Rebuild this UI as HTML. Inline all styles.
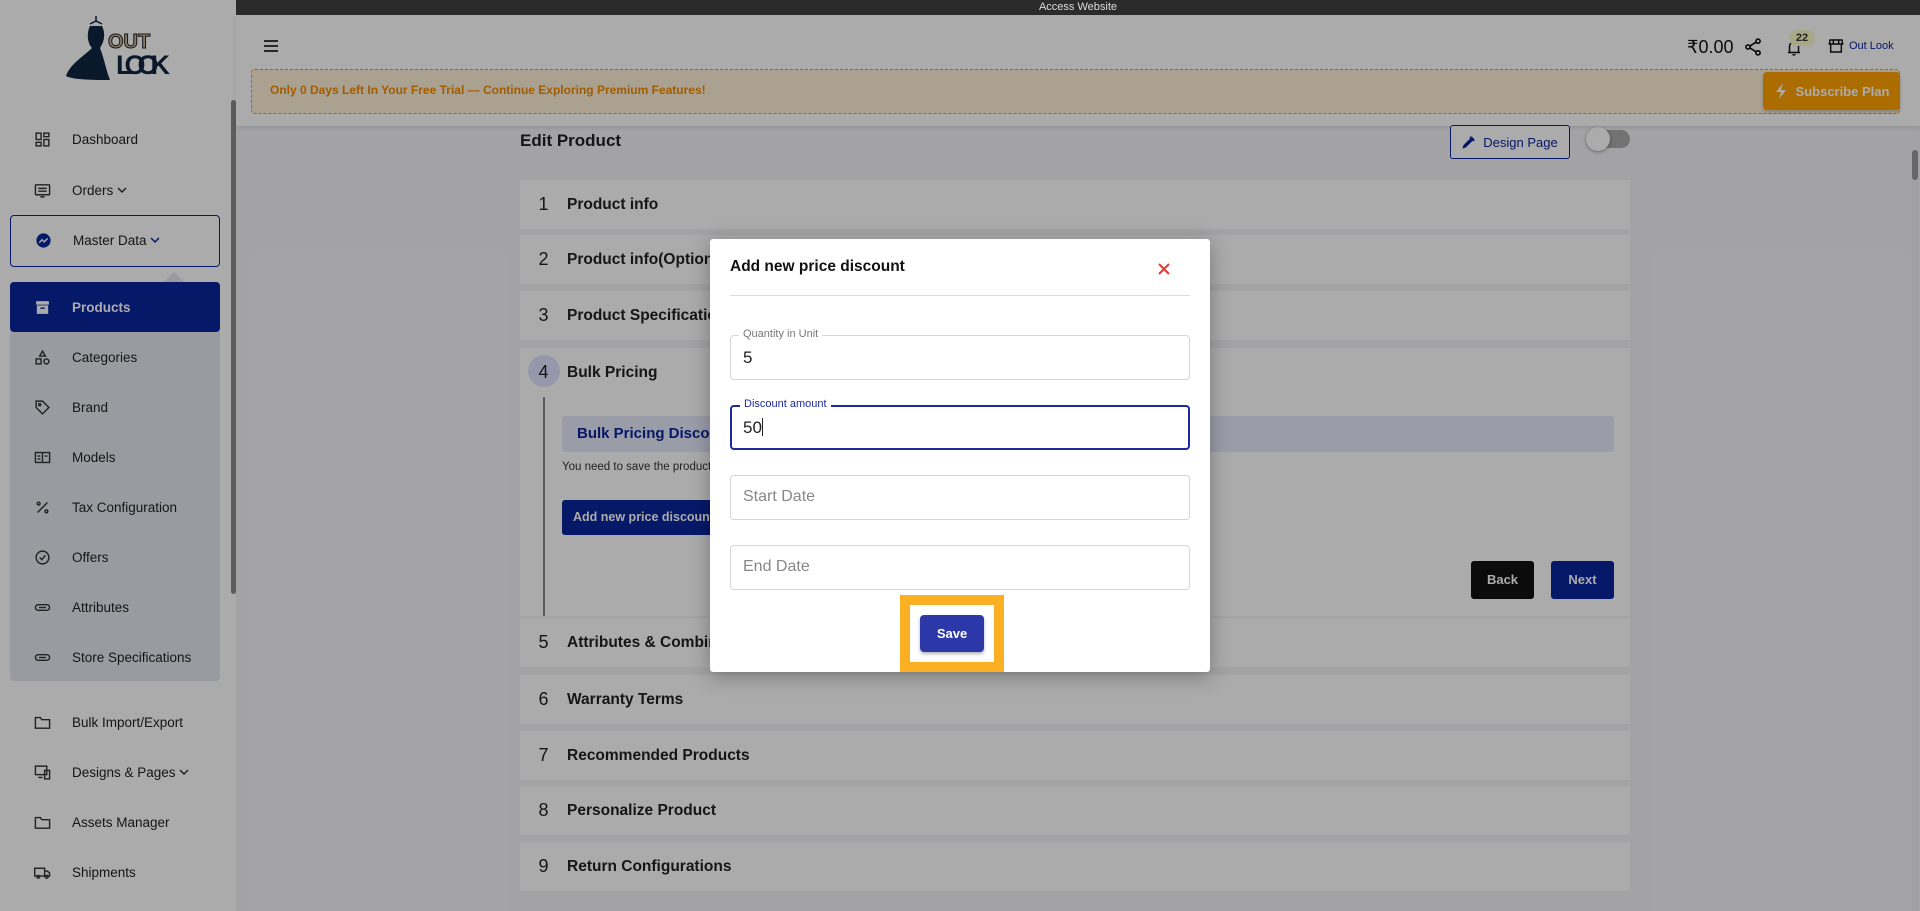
<!DOCTYPE html>
<html><head><meta charset="utf-8"><style>
*{box-sizing:border-box;margin:0;padding:0}
body{width:1920px;height:911px;overflow:hidden;font-family:"Liberation Sans",sans-serif;background:#f4f4f7;position:relative;color:#222}
.abs{position:absolute}
#side{left:0;top:0;width:236px;height:911px;background:#fff}
.nav{position:absolute;left:34px;font-size:13.5px;color:#222;display:flex;align-items:center;height:20px;white-space:nowrap}
.nav svg{width:17px;height:17px;margin-right:21px;flex:none}
.row{position:absolute;left:520px;width:1110px;height:49px;background:#fff;display:flex;align-items:center;font-size:15.5px;font-weight:bold;color:#222}
.row .n{width:47px;text-align:center;font-weight:normal;font-size:18px;color:#222;position:relative}
#ov{left:0;top:0;width:1920px;height:911px;background:rgba(0,0,0,0.33)}
.fld{position:absolute;left:730px;width:460px;height:45px;border:1px solid #d6d6d6;border-radius:4px;background:#fff}
.fld .lb{position:absolute;left:8px;top:-8px;background:#fff;padding:0 4px;font-size:11px;color:#777}
.fld .v{position:absolute;left:12px;top:12px;font-size:17px;color:#222}
.fld .ph{position:absolute;left:12px;top:12px;font-size:16px;color:#888}
</style></head><body>

<div id="side" class="abs">
  <svg class="abs" style="left:64px;top:14px" width="108" height="68" viewBox="0 0 108 68">
    <path d="M32 2 l0 6 M26 10 l6-3 6 3" stroke="#0f2540" stroke-width="1.5" fill="none"/>
    <path d="M26 12 C22 20 24 30 28 34 C20 42 6 50 2 62 C10 66 30 66 46 66 C42 56 40 44 36 34 C40 28 42 20 38 12 Z" fill="#0f2540"/>
    <text x="44" y="34" font-family="Liberation Sans" font-weight="bold" font-size="20" fill="#c9b8a0" stroke="#222" stroke-width="1">OUT</text>
    <text x="52" y="60" font-family="Liberation Sans" font-weight="bold" font-size="27" fill="#0f2540" textLength="54">LOOK</text>
  </svg>
  <div class="abs" style="left:231px;top:100px;width:5px;height:494px;background:#8a8a8a;border-radius:3px"></div>

  <div class="nav" style="top:129px"><svg viewBox="0 0 24 24" fill="none" stroke="#333" stroke-width="2"><rect x="3" y="3" width="7" height="9"/><rect x="14" y="3" width="7" height="5"/><rect x="14" y="12" width="7" height="9"/><rect x="3" y="16" width="7" height="5"/></svg>Dashboard</div>
  <div class="nav" style="top:180px"><svg viewBox="0 0 24 24" fill="none" stroke="#333" stroke-width="2"><rect x="2" y="4" width="20" height="14" rx="1"/><path d="M6 9h12M6 13h12M9 21h6"/></svg>Orders&nbsp;<svg style="width:10px;height:10px;margin:0" viewBox="0 0 10 10"><path d="M1 3l4 4 4-4" stroke="#333" stroke-width="1.5" fill="none"/></svg></div>
  <div class="abs" style="left:10px;top:215px;width:210px;height:52px;border:1px solid #0a259b;border-radius:4px"></div>
  <div class="nav" style="top:230px;left:35px"><svg viewBox="0 0 24 24"><circle cx="12" cy="12" r="10" fill="#0a259b"/><path d="M6 15l4-4 3 3 5-5" stroke="#fff" stroke-width="2" fill="none"/></svg>Master Data&nbsp;<svg style="width:10px;height:10px;margin:0" viewBox="0 0 10 10"><path d="M1 3l4 4 4-4" stroke="#0a259b" stroke-width="1.5" fill="none"/></svg></div>
  <div class="abs" style="left:164px;top:272px;width:0;height:0;border-left:10px solid transparent;border-right:10px solid transparent;border-bottom:10px solid #e6e8f0"></div>
  <div class="abs" style="left:10px;top:282px;width:210px;height:399px;background:#e6e8f0;border-radius:4px"></div>
  <div class="abs" style="left:10px;top:282px;width:210px;height:50px;background:#0a259b;border-radius:4px"></div>
  <div class="nav" style="top:297px;color:#fff;font-weight:bold"><svg viewBox="0 0 24 24"><rect x="3" y="3" width="18" height="5" fill="#fff"/><rect x="4" y="9" width="16" height="12" fill="#fff"/><rect x="9" y="12" width="6" height="2" fill="#0a259b"/></svg>Products</div>
  <div class="nav" style="top:347px"><svg viewBox="0 0 24 24" fill="none" stroke="#333" stroke-width="2"><path d="M12 3l4 7H8z"/><rect x="3" y="14" width="7" height="7"/><circle cx="17.5" cy="17.5" r="3.5"/></svg>Categories</div>
  <div class="nav" style="top:397px"><svg viewBox="0 0 24 24" fill="none" stroke="#333" stroke-width="2"><path d="M3 3h9l9 9-9 9-9-9z"/><circle cx="8" cy="8" r="1.5"/></svg>Brand</div>
  <div class="nav" style="top:447px"><svg viewBox="0 0 24 24" fill="none" stroke="#333" stroke-width="2"><rect x="2" y="5" width="20" height="14"/><path d="M12 5v14M5 10h4M15 10h4M5 14h4"/></svg>Models</div>
  <div class="nav" style="top:497px"><svg viewBox="0 0 24 24" fill="none" stroke="#333" stroke-width="2"><path d="M19 5L5 19"/><circle cx="6.5" cy="6.5" r="2"/><circle cx="17.5" cy="17.5" r="2"/></svg>Tax Configuration</div>
  <div class="nav" style="top:547px"><svg viewBox="0 0 24 24" fill="none" stroke="#333" stroke-width="2"><circle cx="12" cy="12" r="9"/><path d="M8 12l3 3 5-6"/></svg>Offers</div>
  <div class="nav" style="top:597px"><svg viewBox="0 0 24 24" fill="none" stroke="#333" stroke-width="2"><rect x="2" y="8" width="20" height="8" rx="4"/><path d="M7 12h10"/></svg>Attributes</div>
  <div class="nav" style="top:647px"><svg viewBox="0 0 24 24" fill="none" stroke="#333" stroke-width="2"><rect x="2" y="8" width="20" height="8" rx="4"/><path d="M7 12h10"/></svg>Store Specifications</div>
  <div class="nav" style="top:712px"><svg viewBox="0 0 24 24" fill="none" stroke="#333" stroke-width="2"><path d="M2 5h7l2 3h11v12H2z"/></svg>Bulk Import/Export</div>
  <div class="nav" style="top:762px"><svg viewBox="0 0 24 24" fill="none" stroke="#333" stroke-width="2"><rect x="2" y="3" width="16" height="12"/><rect x="15" y="9" width="7" height="12"/><path d="M6 19h6"/></svg>Designs &amp; Pages&nbsp;<svg style="width:10px;height:10px;margin:0" viewBox="0 0 10 10"><path d="M1 3l4 4 4-4" stroke="#333" stroke-width="1.5" fill="none"/></svg></div>
  <div class="nav" style="top:812px"><svg viewBox="0 0 24 24" fill="none" stroke="#333" stroke-width="2"><path d="M2 5h7l2 3h11v12H2z"/></svg>Assets Manager</div>
  <div class="nav" style="top:862px"><svg viewBox="0 0 24 24" fill="none" stroke="#333" stroke-width="2"><rect x="1" y="6" width="14" height="11"/><path d="M15 10h4l3 3v4h-7"/><circle cx="6" cy="18" r="2"/><circle cx="18" cy="18" r="2"/></svg>Shipments</div>
</div>

<div class="abs" style="left:236px;top:15px;width:1684px;height:111px;background:#fff;box-shadow:0 2px 4px rgba(0,0,0,.1)"></div>
<svg class="abs" style="left:263px;top:39px" width="16" height="14" viewBox="0 0 16 14"><path d="M1 2h14M1 7h14M1 12h14" stroke="#222" stroke-width="1.8"/></svg>
<div class="abs" style="left:1687px;top:37px;font-size:18px;color:#111">₹0.00</div>
<svg class="abs" style="left:1743px;top:37px" width="20" height="20" viewBox="0 0 24 24" fill="none" stroke="#111" stroke-width="2"><circle cx="18" cy="5" r="2.5"/><circle cx="6" cy="12" r="2.5"/><circle cx="18" cy="19" r="2.5"/><path d="M8 11l8-5M8 13l8 5"/></svg>
<svg class="abs" style="left:1785px;top:38px" width="18" height="20" viewBox="0 0 24 24" fill="none" stroke="#111" stroke-width="2"><path d="M6 18V10a6 6 0 0112 0v8zM4 18h16M10 21h4"/></svg>
<div class="abs" style="left:1789px;top:30px;width:26px;height:16px;border-radius:8px;background:#fdfbc8;font-size:11px;font-weight:bold;color:#333;text-align:center;line-height:16px">22</div>
<svg class="abs" style="left:1828px;top:38px" width="16" height="16" viewBox="0 0 24 24" fill="none" stroke="#111" stroke-width="2.2"><path d="M3 3h18l1 6H2zM4 9v12h16V9M8 3v6M16 3v6"/></svg>
<div class="abs" style="left:1849px;top:40px;font-size:11px;color:#0a259b">Out Look</div>

<div class="abs" style="left:251px;top:69px;width:1649px;height:45px;background:#fff0d8;border:1px dashed #f39a10;border-radius:4px"></div>
<div class="abs" style="left:270px;top:83px;font-size:12px;color:#f28a00;font-weight:bold">Only 0 Days Left In Your Free Trial — Continue Exploring Premium Features!</div>
<div class="abs" style="left:1763px;top:72px;width:137px;height:38px;background:#ffa200;border-radius:4px;box-shadow:0 2px 3px rgba(0,0,0,.2);color:#fff;font-size:13px;font-weight:bold;display:flex;align-items:center;justify-content:center">
<svg width="14" height="16" viewBox="0 0 14 16" style="margin-right:8px"><path d="M9 0L2 9h5l-2 7 7-9H7z" fill="#fff"/></svg>Subscribe Plan</div>

<div class="abs" style="left:520px;top:131px;font-size:17px;font-weight:bold;color:#222">Edit Product</div>
<div class="abs" style="left:1450px;top:125px;width:120px;height:34px;border:1.5px solid #0a259b;border-radius:3px;background:#fff;display:flex;align-items:center;justify-content:center;font-size:13px;color:#0a259b">
<svg width="14" height="14" viewBox="0 0 24 24" style="margin-right:7px"><path d="M3 21l3-1 13-13-2-2L4 18zM14 3l7 7" stroke="#0a259b" stroke-width="3" fill="none"/></svg>Design Page</div>
<div class="abs" style="left:1588px;top:130px;width:42px;height:18px;border-radius:9px;background:#aaa"></div>
<div class="abs" style="left:1586px;top:127px;width:24px;height:24px;border-radius:12px;background:#fff;box-shadow:0 1px 3px rgba(0,0,0,.4)"></div>

<div class="row" style="top:180px"><span class="n">1</span>Product info</div>
<div class="row" style="top:235px"><span class="n">2</span>Product info(Optional)</div>
<div class="row" style="top:291px"><span class="n">3</span>Product Specifications</div>
<div class="row" style="top:348px"><span class="n"><span style="position:absolute;left:8px;top:-7px;width:32px;height:32px;border-radius:16px;background:#dfe3ff"></span><span style="position:relative">4</span></span>Bulk Pricing</div>
<div class="abs" style="left:520px;top:397px;width:1110px;height:219px;background:#fff"></div>
<div class="abs" style="left:543px;top:397px;width:2px;height:219px;background:#888"></div>
<div class="abs" style="left:562px;top:416px;width:1052px;height:36px;background:#e6e9fb;border-radius:3px;font-size:15px;font-weight:bold;color:#0a259b;padding:9px 15px">Bulk Pricing Discount</div>
<div class="abs" style="left:562px;top:461px;font-size:11.5px;color:#333">You need to save the product before adding bulk pricing discount.</div>
<div class="abs" style="left:562px;top:500px;width:170px;height:35px;background:#0a259b;border-radius:3px;color:#fff;font-size:12.5px;font-weight:bold;padding:10px 11px;white-space:nowrap">Add new price discount</div>
<div class="abs" style="left:1471px;top:561px;width:63px;height:38px;background:#111;border-radius:3px;color:#fff;font-size:13px;font-weight:bold;text-align:center;line-height:38px">Back</div>
<div class="abs" style="left:1551px;top:561px;width:63px;height:38px;background:#0a259b;border-radius:3px;color:#fff;font-size:13px;font-weight:bold;text-align:center;line-height:38px">Next</div>
<div class="row" style="top:618px"><span class="n">5</span>Attributes &amp; Combinations</div>
<div class="row" style="top:675px"><span class="n">6</span>Warranty Terms</div>
<div class="row" style="top:731px"><span class="n">7</span>Recommended Products</div>
<div class="row" style="top:786px"><span class="n">8</span>Personalize Product</div>
<div class="row" style="top:842px"><span class="n">9</span>Return Configurations</div>
<div class="abs" style="left:1912px;top:150px;width:6px;height:761px;background:#eee"></div>
<div class="abs" style="left:1912px;top:150px;width:6px;height:30px;background:#999;border-radius:3px"></div>

<div id="ov" class="abs"></div>
<div class="abs" style="left:236px;top:0;width:1684px;height:15px;background:#2b2b2b;color:#ddd;font-size:11px;text-align:center;line-height:15px">Access Website</div>

<div class="abs" style="left:710px;top:239px;width:500px;height:433px;background:#fff;border-radius:3px;box-shadow:0 4px 20px rgba(0,0,0,.3)"></div>
<div class="abs" style="left:730px;top:258px;font-size:15.5px;font-weight:bold;color:#111">Add new price discount</div>
<svg class="abs" style="left:1158px;top:263px" width="12" height="12" viewBox="0 0 12 12"><path d="M1 1l10 10M11 1L1 11" stroke="#e53935" stroke-width="2"/></svg>
<div class="abs" style="left:730px;top:295px;width:460px;height:1px;background:#ddd"></div>
<div class="fld" style="top:335px"><span class="lb">Quantity in Unit</span><span class="v">5</span></div>
<div class="fld" style="top:405px;border:2px solid #1e2a9c"><span class="lb" style="color:#1e2a9c;top:-9px">Discount amount</span><span class="v" style="top:11px;left:11px">50<span style="display:inline-block;width:1px;height:18px;background:#222;vertical-align:-3px"></span></span></div>
<div class="fld" style="top:475px"><span class="ph">Start Date</span></div>
<div class="fld" style="top:545px"><span class="ph">End Date</span></div>
<div class="abs" style="left:900px;top:595px;width:104px;height:77px;border:10px solid #fbb024;background:#fff"></div>
<div class="abs" style="left:920px;top:615px;width:64px;height:37px;background:#2d38a8;border-radius:4px;box-shadow:0 2px 3px rgba(0,0,0,.3);color:#fff;font-size:13px;font-weight:bold;text-align:center;line-height:37px">Save</div>
</body></html>
